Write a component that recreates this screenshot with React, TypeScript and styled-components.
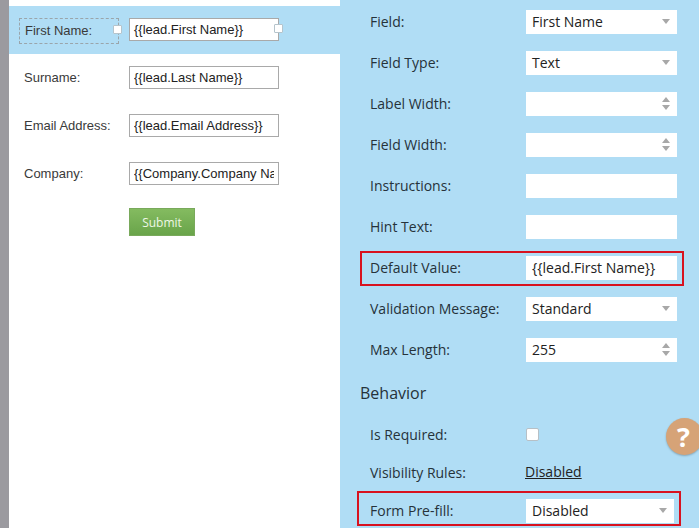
import React from "react";
import styled, { createGlobalStyle } from "styled-components";

const Global = createGlobalStyle`
  html, body { margin: 0; padding: 0; background: #fff; }
  #root { width: 699px; height: 528px; overflow: hidden; }
`;

const Page = styled.div`
  position: relative;
  display: flex;
  width: 699px;
  height: 528px;
  overflow: hidden;
`;
const Rail = styled.div`
  width: 9px;
  flex: none;
  background: #9b9a9f;
`;
const Canvas = styled.div`
  width: 331px;
  flex: none;
  padding-top: 6px;
  box-sizing: border-box;
  background: #fff;
  font-family: "Liberation Sans", Arial, sans-serif;
  font-size: 13px;
  color: #3a3a3a;
`;
const FormRow = styled.div<{ $selected?: boolean }>`
  display: flex;
  align-items: center;
  box-sizing: border-box;
  height: 48px;
  padding-bottom: 1px;
  padding-left: ${(p) => (p.$selected ? "10px" : "15px")};
  background: ${(p) => (p.$selected ? "#b0ddf5" : "transparent")};
`;
const FormLabel = styled.div<{ $selected?: boolean }>`
  position: relative;
  box-sizing: border-box;
  display: flex;
  align-items: center;
  width: ${(p) => (p.$selected ? "100px" : "95px")};
  height: ${(p) => (p.$selected ? "26px" : "auto")};
  margin-right: 10px;
  margin-top: ${(p) => (p.$selected ? "3px" : "0")};
  padding-left: ${(p) => (p.$selected ? "5px" : "0")};
  padding-bottom: ${(p) => (p.$selected ? "2px" : "0")};
  border: ${(p) => (p.$selected ? "1px dashed #9aa5ab" : "none")};
  white-space: nowrap;
`;
const FormInput = styled.div`
  position: relative;
  box-sizing: border-box;
  width: 150px;
  height: 23px;
  padding: 0 4px;
  background: #fff;
  border: 1px solid #a9a9a9;
  line-height: 21px;
  color: #222;
  white-space: nowrap;
`;
const Clip = styled.div`
  overflow: hidden;
`;
const Handle = styled.span<{ $side: "label" | "field" }>`
  position: absolute;
  top: ${(p) => (p.$side === "label" ? "6px" : "5px")};
  right: ${(p) => (p.$side === "label" ? "-4px" : "-5px")};
  width: 7px;
  height: 7px;
  background: #fff;
  border: 1px solid #b5c4cc;
  border-radius: 1px;
`;
const SubmitRow = styled.div`
  padding: 10px 0 0 120px;
`;
const Submit = styled.button`
  display: block;
  width: 66px;
  height: 28px;
  padding: 0;
  border: 1px solid #79a95b;
  background: linear-gradient(#84bb60, #69a44a);
  color: #eef7e6;
  font-family: "Open Sans", sans-serif;
  font-size: 12px;
`;

const Panel = styled.div`
  flex: 1;
  background: #b0ddf5;
  padding-top: 1px;
  font-family: "Open Sans", sans-serif;
  font-size: 14px;
  color: #26323a;
`;
const PropRow = styled.div<{ $height?: number }>`
  position: relative;
  display: flex;
  align-items: center;
  height: ${(p) => p.$height ?? 41}px;
  padding-left: 30px;
`;
const Highlight = styled.span<{ $left: number; $right: number; $top: number; $bottom: number }>`
  position: absolute;
  left: ${(p) => p.$left}px;
  right: ${(p) => p.$right}px;
  top: ${(p) => p.$top}px;
  bottom: ${(p) => p.$bottom}px;
  border: 2px solid #d8121f;
  pointer-events: none;
`;
const PropLabel = styled.div`
  width: 156px;
  flex: none;
  white-space: nowrap;
`;
const Control = styled.div<{ $width?: number }>`
  position: relative;
  box-sizing: border-box;
  width: ${(p) => p.$width ?? 151}px;
  height: 24px;
  padding-left: 6px;
  background: #fff;
  line-height: 24px;
  color: #222;
`;
const Caret = styled.svg`
  position: absolute;
  right: 7px;
  top: 9px;
`;
const Spinner = styled.svg`
  position: absolute;
  right: 7px;
  top: 5px;
`;
const Heading = styled.div`
  height: 44px;
  padding-left: 20px;
  font-size: 16px;
  line-height: 46px;
  color: #26323a;
`;
const Check = styled.span`
  display: block;
  box-sizing: border-box;
  width: 13px;
  height: 13px;
  background: #fff;
  border: 1px solid #b7c0c6;
  border-radius: 2px;
`;
const RuleLink = styled.a`
  margin: -3px 0 0 -1px;
  color: #222;
  text-decoration: underline;
`;
const Help = styled.div`
  position: absolute;
  left: 666px;
  top: 418px;
  width: 37px;
  height: 37px;
  border-radius: 50%;
  background: #d6a377;
  box-shadow: 0 1px 2px rgba(0, 0, 0, 0.25);
  color: #fff;
  font-family: "Open Sans", sans-serif;
  font-weight: 700;
  font-size: 27px;
  line-height: 37px;
  padding-right: 2px;
  box-sizing: border-box;
  text-align: center;
`;

const Select = ({ value, width }: { value: string; width?: number }) => (
  <Control $width={width}>
    {value}
    <Caret width="8" height="5" viewBox="0 0 8 5">
      <path d="M0 0h8L4 5z" fill="#a8a8a8" />
    </Caret>
  </Control>
);

const Stepper = ({ value }: { value?: string }) => (
  <Control>
    {value}
    <Spinner width="8" height="13" viewBox="0 0 8 13">
      <path d="M4 0L8 5H0zM0 8h8L4 13z" fill="#a8a8a8" />
    </Spinner>
  </Control>
);

const formFields = [
  { label: "Surname:", value: "{{lead.Last Name}}" },
  { label: "Email Address:", value: "{{lead.Email Address}}" },
  { label: "Company:", value: "{{Company.Company Name}}" },
];

export default function App() {
  return (
    <Page>
      <Global />
      <Rail />
      <Canvas>
        <FormRow $selected>
          <FormLabel $selected>
            First Name:
            <Handle $side="label" />
          </FormLabel>
          <FormInput>
            {"{{lead.First Name}}"}
            <Handle $side="field" />
          </FormInput>
        </FormRow>
        {formFields.map((f) => (
          <FormRow key={f.label}>
            <FormLabel>{f.label}</FormLabel>
            <FormInput>
              <Clip>{f.value}</Clip>
            </FormInput>
          </FormRow>
        ))}
        <SubmitRow>
          <Submit>Submit</Submit>
        </SubmitRow>
      </Canvas>
      <Panel>
        <PropRow>
          <PropLabel>Field:</PropLabel>
          <Select value="First Name" />
        </PropRow>
        <PropRow>
          <PropLabel>Field Type:</PropLabel>
          <Select value="Text" />
        </PropRow>
        <PropRow>
          <PropLabel>Label Width:</PropLabel>
          <Stepper />
        </PropRow>
        <PropRow>
          <PropLabel>Field Width:</PropLabel>
          <Stepper />
        </PropRow>
        <PropRow>
          <PropLabel>Instructions:</PropLabel>
          <Control />
        </PropRow>
        <PropRow>
          <PropLabel>Hint Text:</PropLabel>
          <Control />
        </PropRow>
        <PropRow>
          <PropLabel>Default Value:</PropLabel>
          <Control>{"{{lead.First Name}}"}</Control>
          <Highlight $left={20} $right={15} $top={4} $bottom={2} />
        </PropRow>
        <PropRow>
          <PropLabel>Validation Message:</PropLabel>
          <Select value="Standard" />
        </PropRow>
        <PropRow>
          <PropLabel>Max Length:</PropLabel>
          <Stepper value="255" />
        </PropRow>
        <Heading>Behavior</Heading>
        <PropRow>
          <PropLabel>Is Required:</PropLabel>
          <Check />
        </PropRow>
        <PropRow $height={35}>
          <PropLabel>Visibility Rules:</PropLabel>
          <RuleLink>Disabled</RuleLink>
        </PropRow>
        <PropRow>
          <PropLabel>Form Pre-fill:</PropLabel>
          <Select value="Disabled" width={148} />
          <Highlight $left={17} $right={18} $top={1} $bottom={5} />
        </PropRow>
      </Panel>
      <Help>?</Help>
    </Page>
  );
}
